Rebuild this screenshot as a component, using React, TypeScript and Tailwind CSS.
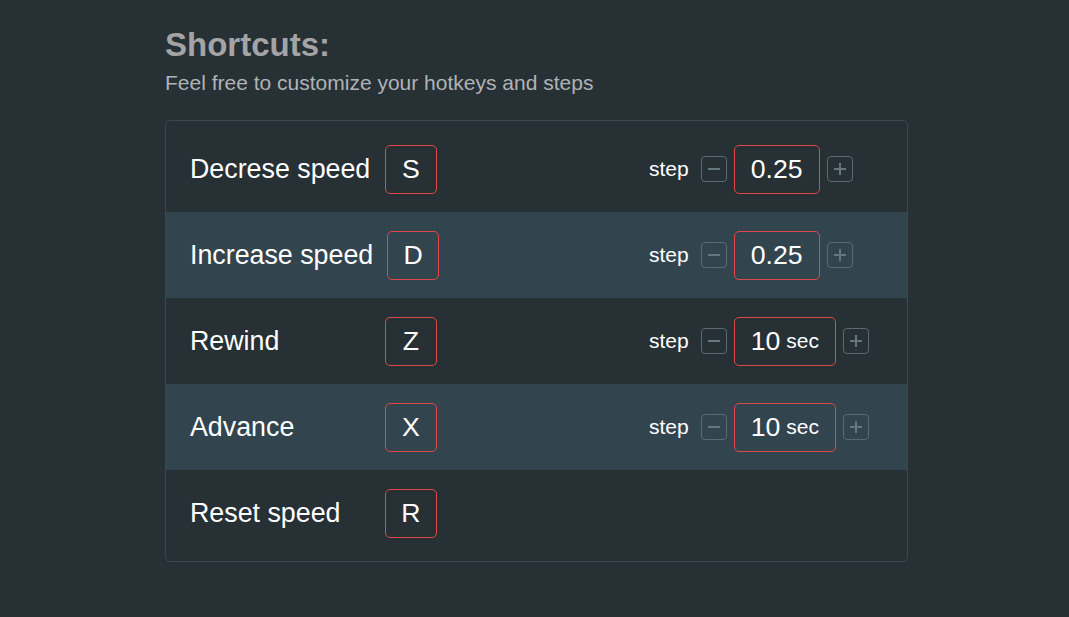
import React from 'react'

type Shortcut = {
  label: string
  hotkey: string
  value?: string
  unit?: string
}

const shortcuts: Shortcut[] = [
  { label: 'Decrese speed', hotkey: 'S', value: '0.25' },
  { label: 'Increase speed', hotkey: 'D', value: '0.25' },
  { label: 'Rewind', hotkey: 'Z', value: '10', unit: 'sec' },
  { label: 'Advance', hotkey: 'X', value: '10', unit: 'sec' },
  { label: 'Reset speed', hotkey: 'R' },
]

function StepButton({ plus }: { plus?: boolean }) {
  return (
    <button className="w-[26px] h-[26px] rounded-[4px] border border-[#5a6a72] flex items-center justify-center">
      <svg width="14" height="14" viewBox="0 0 14 14" fill="none" stroke="#66767e" strokeWidth="2" strokeLinecap="butt">
        <line x1="1" y1="7" x2="13" y2="7" />
        {plus && <line x1="7" y1="1" x2="7" y2="13" />}
      </svg>
    </button>
  )
}

export default function App() {
  return (
    <div
      className="min-h-screen w-full bg-[#263035] pt-[29px] pl-[165px]"
      style={{ fontFamily: '"Liberation Sans", Arial, sans-serif' }}
    >
      {/* Header */}
      <h1 className="text-[33px] leading-[32px] font-bold text-[#a4a4a4]">Shortcuts:</h1>
      <p className="mt-[9px] text-[21px] leading-[25px] text-[#b0b3b5]">
        Feel free to customize your hotkeys and steps
      </p>

      {/* Shortcut list */}
      <div className="mt-[25px] w-[743px] rounded-[5px] border border-[#3a4950] py-[5px]">
        {shortcuts.map((s, i) => (
          <div
            key={s.hotkey}
            className={`h-[86px] flex items-center pl-[24px] text-white ${i % 2 === 1 ? 'bg-[#32454f]' : ''}`}
          >
            <div className="w-[459px] flex items-center">
              <span className="min-w-[181px] mr-[14px] text-[26.8px] whitespace-nowrap">{s.label}</span>
              <div className="w-[52px] h-[49px] rounded-[5px] border border-[#e04848] flex items-center justify-center text-[26.67px]">
                {s.hotkey}
              </div>
            </div>

            {s.value && (
              <div className="flex items-center">
                <span className="text-[21px] mr-[12px]">step</span>
                <StepButton />
                <div className="mx-[7px] h-[49px] px-[16px] rounded-[5px] border border-[#e04848] flex items-center">
                  <span className="text-[26.67px]">{s.value}</span>
                  {s.unit && <span className="ml-[6px] text-[21px]">{s.unit}</span>}
                </div>
                <StepButton plus />
              </div>
            )}
          </div>
        ))}
      </div>
    </div>
  )
}
